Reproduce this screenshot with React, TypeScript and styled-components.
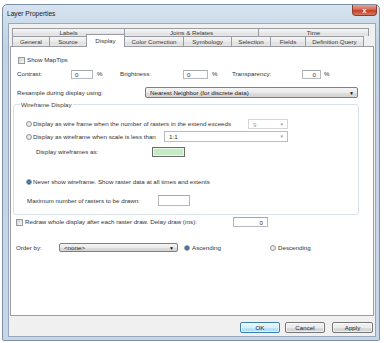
import React from "react";
import styled, { createGlobalStyle, css } from "styled-components";

const GlobalStyle = createGlobalStyle`
  html, body {
    margin: 0;
    padding: 0;
    background: #fff;
  }
  body {
    font-family: "Liberation Sans", Arial, sans-serif;
    font-size: 6.2px;
    color: #333;
  }
`;

const Window = styled.div`
  margin: 4px 0 0 2px;
  width: 378px;
  height: 337px;
  box-sizing: border-box;
  border: 1px solid #7d8fa4;
  border-radius: 5px 5px 2px 2px;
  background: linear-gradient(#d6e3f0, #c1d3e6 40px, #c7d7e8);
  display: flex;
  flex-direction: column;
`;

const TitleBar = styled.div`
  display: flex;
  align-items: flex-start;
  justify-content: space-between;
  height: 18px;
  padding-left: 4px;
`;

const Title = styled.span`
  font-size: 6.6px;
  line-height: 7px;
  margin-top: 5px;
  color: #1a1a1a;
`;

const CloseButton = styled.div`
  width: 25px;
  height: 11px;
  margin-right: 2px;
  box-sizing: border-box;
  border: 1px solid #8d3b30;
  border-top: none;
  border-radius: 0 0 4px 4px;
  background: linear-gradient(#e9a597, #d0614d 50%, #c23b22 51%, #d8775d);
  color: #fff;
  font-weight: bold;
  font-size: 7px;
  display: flex;
  align-items: center;
  justify-content: center;
`;

const Client = styled.div`
  flex: 1;
  margin: 0 3px 3px 5px;
  background: #f0f0f0;
  border: 1px solid #98a8ba;
  padding: 4px 1px 0 1px;
  display: flex;
  flex-direction: column;
`;

const TabRow = styled.div<{ $h: number }>`
  display: flex;
  align-items: flex-end;
  height: ${(p) => p.$h}px;
  margin-left: 2px;
`;

const Tab = styled.div<{ $w: number; $active?: boolean }>`
  width: ${(p) => p.$w}px;
  height: 100%;
  box-sizing: border-box;
  border: 1px solid #9a9ca3;
  border-bottom: none;
  margin-right: -1px;
  background: linear-gradient(#f6f6f6, #ebebeb 50%, #e0e0e0 51%, #e6e6e6);
  display: flex;
  align-items: center;
  justify-content: center;
  white-space: nowrap;
  color: #3a3a3a;
  ${(p) =>
    p.$active &&
    css`
      position: relative;
      z-index: 1;
      height: 13px;
      margin-bottom: -1px;
      background: #fff;
      align-items: flex-start;
      padding-top: 2px;
    `}
`;

const Panel = styled.div`
  height: 270px;
  box-sizing: border-box;
  background: #fff;
  border: 1px solid #9a9ca3;
  padding-left: 6px;
  display: flex;
  flex-direction: column;
`;

const Row = styled.div<{ $h: number; $mt: number; $ml?: number }>`
  display: flex;
  align-items: center;
  height: ${(p) => p.$h}px;
  margin-top: ${(p) => p.$mt}px;
  margin-left: ${(p) => p.$ml ?? 0}px;
  white-space: nowrap;
`;

const Label = styled.span<{ $w?: number; $pl?: number }>`
  ${(p) => p.$w !== undefined && `width: ${p.$w}px; flex: none;`}
  padding-left: ${(p) => p.$pl ?? 0}px;
  box-sizing: border-box;
  line-height: 8px;
`;

const TextBox = styled.div<{ $w: number; $h: number; $right?: boolean }>`
  width: ${(p) => p.$w}px;
  height: ${(p) => p.$h}px;
  flex: none;
  box-sizing: border-box;
  border: 1px solid #b5b8bd;
  border-top-color: #a3a8af;
  background: #fff;
  display: flex;
  align-items: center;
  justify-content: ${(p) => (p.$right ? "flex-end" : "flex-start")};
  padding: 0 ${(p) => (p.$right ? 4 : 0)}px 0 ${(p) => (p.$right ? 0 : 3)}px;
`;

const Combo = styled.div<{
  $w: number;
  $h: number;
  $variant: "button" | "edit" | "disabled";
}>`
  width: ${(p) => p.$w}px;
  height: ${(p) => p.$h}px;
  flex: none;
  box-sizing: border-box;
  display: flex;
  align-items: center;
  justify-content: space-between;
  padding: 0 3px 0 4px;
  ${(p) =>
    p.$variant === "button"
      ? css`
          border: 1px solid #7f7f7f;
          border-radius: 2px;
          background: linear-gradient(#f4f4f4, #ebebeb 50%, #dedede 51%, #d4d4d4);
          color: #1f1f1f;
        `
      : p.$variant === "edit"
      ? css`
          border: 1px solid #b8bbc0;
          background: #fff;
          color: #333;
        `
      : css`
          border: 1px solid #d3d5d8;
          background: #fff;
          color: #a0a0a0;
        `}
`;

const Arrow = styled.span<{ $dark?: boolean }>`
  font-size: ${(p) => (p.$dark ? 5 : 4.5)}px;
  color: ${(p) => (p.$dark ? "#111" : "#a0a0a0")};
`;

const Radio = styled.span<{ $checked?: boolean }>`
  width: 6px;
  height: 6px;
  flex: none;
  box-sizing: border-box;
  border-radius: 50%;
  border: 1px solid #979a9f;
  background: ${(p) =>
    p.$checked
      ? "radial-gradient(circle, #6cb0e4 0, #2a6aa3 1.3px, #1d4e7d 2px, #e8e8e8 2.3px)"
      : "radial-gradient(circle, #f6f6f6, #d8d8d8)"};
  margin-right: 1px;
`;

const Checkbox = styled.span`
  width: 7px;
  height: 7px;
  flex: none;
  box-sizing: border-box;
  border: 1px solid #979a9f;
  background: linear-gradient(135deg, #d2d2d2, #f8f8f8);
  margin-right: 2px;
`;

const GroupBox = styled.fieldset`
  margin: 3px 0 0 -4px;
  width: 346px;
  box-sizing: border-box;
  padding: 0 12px 8px 12px;
  min-width: 0;
  border: 1px solid #d8e1e7;
  border-radius: 3px;
  display: flex;
  flex-direction: column;
`;

const Legend = styled.legend`
  padding: 0 1px;
  margin-left: -6px;
  line-height: 7px;
  color: #3a3a3a;
`;

const Swatch = styled.div`
  width: 33px;
  height: 10px;
  box-sizing: border-box;
  border: 1px solid #6a6a6a;
  box-shadow: inset 0 0 0 1px #eaf6ea;
  background: #c5ebc6;
`;

const OptionGroup = styled.div<{ $w?: number; $ml?: number }>`
  display: flex;
  align-items: center;
  margin-left: ${(p) => p.$ml ?? 0}px;
  ${(p) => p.$w !== undefined && `width: ${p.$w}px;`}
`;

const ButtonRow = styled.div`
  display: flex;
  justify-content: flex-end;
  margin: 6px 1px 0 0;
`;

const Button = styled.button<{ $w: number; $ml: number; $primary?: boolean }>`
  width: ${(p) => p.$w}px;
  height: 11px;
  margin-left: ${(p) => p.$ml}px;
  padding: 0;
  box-sizing: border-box;
  font-family: inherit;
  font-size: 6.2px;
  color: #222;
  border-radius: 2px;
  border: 1px solid ${(p) => (p.$primary ? "#3c7fb1" : "#777")};
  background: ${(p) =>
    p.$primary
      ? "linear-gradient(#eaf6fd, #d9f0fc 50%, #bee6fd 51%, #a7d9f5)"
      : "linear-gradient(#f2f2f2, #ebebeb 50%, #dddddd 51%, #cfcfcf)"};
  box-shadow: inset 0 0 0 1px rgba(255, 255, 255, 0.6);
`;

const topTabs = [
  { label: "Labels", w: 113 },
  { label: "Joins & Relates", w: 135 },
  { label: "Time", w: 111 },
];

const bottomTabs = [
  { label: "General", w: 38 },
  { label: "Source", w: 38 },
  { label: "Display", w: 39, active: true },
  { label: "Color Correction", w: 60 },
  { label: "Symbology", w: 49 },
  { label: "Selection", w: 40 },
  { label: "Fields", w: 36 },
  { label: "Definition Query", w: 59 },
];

export default function App() {
  return (
    <>
      <GlobalStyle />
      <Window>
        <TitleBar>
          <Title>Layer Properties</Title>
          <CloseButton>x</CloseButton>
        </TitleBar>
        <Client>
          <TabRow $h={8}>
            {topTabs.map((t) => (
              <Tab key={t.label} $w={t.w}>
                {t.label}
              </Tab>
            ))}
          </TabRow>
          <TabRow $h={10}>
            {bottomTabs.map((t) => (
              <Tab key={t.label} $w={t.w} $active={t.active}>
                {t.label}
              </Tab>
            ))}
          </TabRow>
          <Panel>
            <Row $h={10} $mt={8} $ml={1}>
              <Checkbox />
              <Label>Show MapTips</Label>
            </Row>
            <Row $h={10} $mt={4}>
              <Label $w={54}>Contrast:</Label>
              <TextBox $w={22} $h={9}>0</TextBox>
              <Label $w={27} $pl={4}>%</Label>
              <Label $w={63}>Brightness:</Label>
              <TextBox $w={25} $h={9}>0</TextBox>
              <Label $w={24} $pl={4}>%</Label>
              <Label $w={70}>Transparency:</Label>
              <TextBox $w={19} $h={9} $right>0</TextBox>
              <Label $pl={3}>%</Label>
            </Row>
            <Row $h={11} $mt={8}>
              <Label $w={128}>Resample during display using:</Label>
              <Combo $w={213} $h={11} $variant="button">
                <span>Nearest Neighbor (for discrete data)</span>
                <Arrow $dark>▼</Arrow>
              </Combo>
            </Row>
            <GroupBox>
              <Legend>Wireframe Display</Legend>
              <Row $h={10} $mt={11}>
                <Radio />
                <Label $w={215}>
                  Display as wire frame when the number of rasters in the extend exceeds
                </Label>
                <Combo $w={40} $h={10} $variant="disabled">
                  <span>9</span>
                  <Arrow>▼</Arrow>
                </Combo>
              </Row>
              <Row $h={11} $mt={2}>
                <Radio />
                <Label $w={131}>Display as wireframe when scale is less than</Label>
                <Combo $w={124} $h={11} $variant="edit">
                  <span>1:1</span>
                  <Arrow>▼</Arrow>
                </Combo>
              </Row>
              <Row $h={10} $mt={5}>
                <Label $w={126} $pl={10}>
                  Display wireframes as:
                </Label>
                <Swatch />
              </Row>
              <Row $h={8} $mt={21}>
                <Radio $checked />
                <Label>Never show wireframe. Show raster data at all times and extents</Label>
              </Row>
              <Row $h={11} $mt={9} $ml={1}>
                <Label $w={131}>Maximum number of rasters to be drawn:</Label>
                <TextBox $w={32} $h={11} />
              </Row>
            </GroupBox>
            <Row $h={10} $mt={2} $ml={-1}>
              <Checkbox />
              <Label $w={208}>
                Redraw whole display after each raster draw. Delay draw (ms):
              </Label>
              <TextBox $w={35} $h={10} $right>
                0
              </TextBox>
            </Row>
            <Row $h={9} $mt={16} $ml={-1}>
              <Label $w={43}>Order by:</Label>
              <Combo $w={119} $h={9} $variant="button">
                <span>&lt;none&gt;</span>
                <Arrow $dark>▼</Arrow>
              </Combo>
              <OptionGroup $w={86} $ml={6}>
                <Radio $checked />
                <Label $pl={1}>Ascending</Label>
              </OptionGroup>
              <OptionGroup>
                <Radio />
                <Label $pl={1}>Descending</Label>
              </OptionGroup>
            </Row>
          </Panel>
          <ButtonRow>
            <Button $w={40} $ml={0} $primary>
              OK
            </Button>
            <Button $w={40} $ml={5}>
              Cancel
            </Button>
            <Button $w={41} $ml={7}>
              Apply
            </Button>
          </ButtonRow>
        </Client>
      </Window>
    </>
  );
}
